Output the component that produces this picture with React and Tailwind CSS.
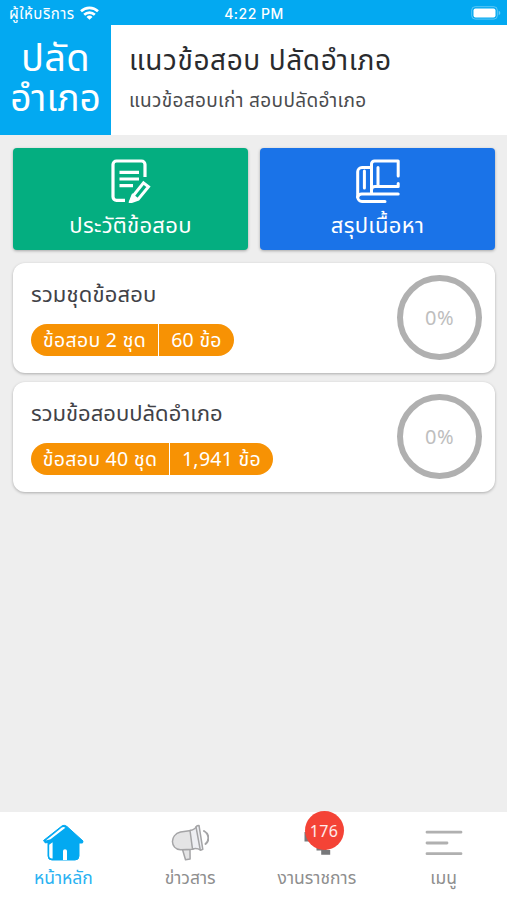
import React from 'react';

const sets = [
  {
    id: 1,
    title: 'รวมชุดข้อสอบ',
    titleClass: 'tracking-[0.15px]',
    sets: 'ข้อสอบ 2 ชุด',
    items: '60 ข้อ',
    setsWidth: 'w-[127px]',
    itemsWidth: 'w-[75px]',
  },
  {
    id: 2,
    title: 'รวมข้อสอบปลัดอำเภอ',
    titleClass: 'tracking-normal',
    sets: 'ข้อสอบ 40 ชุด',
    items: '1,941 ข้อ',
    setsWidth: 'w-[138px]',
    itemsWidth: 'w-[103px]',
  },
];

function WifiIcon() {
  return (
    <svg width="19" height="14" viewBox="0 0 19 14" fill="none" stroke="white" strokeWidth="2.6">
      <path d="M1 5.3a12.2 12.2 0 0 1 17 0" />
      <path d="M4.2 8.8a7.6 7.6 0 0 1 10.6 0" />
      <path d="M9.5 13.8 6.5 10.9a4.3 4.3 0 0 1 6 0z" fill="white" stroke="none" />
    </svg>
  );
}

function BatteryIcon() {
  return (
    <svg width="30" height="14" viewBox="0 0 30 14">
      <rect x="0.7" y="0.7" width="25.6" height="12.4" rx="3.5" fill="none" stroke="white" strokeOpacity="0.35" />
      <rect x="2.5" y="2.4" width="22" height="9" rx="2" fill="white" />
      <path d="M27.7 4.8v4.4c1-.4 1.6-1.2 1.6-2.2s-.6-1.8-1.6-2.2z" fill="white" fillOpacity="0.4" />
    </svg>
  );
}

function StatusBar() {
  return (
    <div className="h-[25px] bg-[#03a9f1] text-white flex items-center justify-between pl-[9px] pr-[6px] shrink-0">
      <div className="flex items-center gap-[5px] w-[110px]">
        <span className="text-[15px] leading-none w-[66px] pt-[3px] tracking-[0.5px] whitespace-nowrap">ผู้ให้บริการ</span>
        <WifiIcon />
      </div>
      <span className="text-[14px] leading-none font-medium tracking-[0.5px] font-['Inter',sans-serif] pt-[3px]">4:22 PM</span>
      <div className="w-[112px] flex justify-end pt-[1px]">
        <BatteryIcon />
      </div>
    </div>
  );
}

function Header() {
  return (
    <header className="flex h-[110px] bg-white shrink-0">
      <div className="w-[111px] bg-[#03a9f1] text-white text-center leading-[39px] pt-[15px] whitespace-nowrap">
        <div className="text-[38px] tracking-[0.3px]">ปลัด</div>
        <div className="text-[37px] leading-[42px]">อำเภอ</div>
      </div>
      <div className="pl-[18px] pt-[17px] whitespace-nowrap">
        <h1 className="text-[28px] leading-[40px] tracking-[0.6px] text-[#2a2b2e]">แนวข้อสอบ ปลัดอำเภอ</h1>
        <p className="text-[19px] leading-[39px] tracking-[0.35px] text-[#4a4b4e]">แนวข้อสอบเก่า สอบปลัดอำเภอ</p>
      </div>
    </header>
  );
}

function HistoryIcon() {
  return (
    <svg width="40" height="44" viewBox="0 0 40 44" fill="none" stroke="white" strokeWidth="3.2">
      <path d="M34 18V5.5a3.5 3.5 0 0 0-3.5-3.5h-25A3.5 3.5 0 0 0 2 5.5v32.3a3.5 3.5 0 0 0 3.5 3.5H14" />
      <path d="M8.5 13.3H28M8.5 20H28M8.5 26.7h13.5" />
      <path d="m32.5 23.8 5 4-10.3 12.4-7.4 2.6 2.6-6.2z" strokeWidth="3" />
      <path d="m17.5 43.6 3.6-9.4 6.8 5.6z" fill="white" stroke="none" />
    </svg>
  );
}

function BooksIcon() {
  return (
    <svg width="44" height="44" viewBox="0 0 44 44" fill="none" stroke="white" strokeWidth="3" strokeLinecap="round" strokeLinejoin="round">
      <path d="M42.2 17V2H18.5a3 3 0 0 0-3 3v29.5M42.2 24.5v3H19a3.5 3.5 0 0 0-3.5 3.5" />
      <path d="M15.5 8.5H6a4.3 4.3 0 0 0-4.3 4.3v25.4A4.3 4.3 0 0 0 6 42.4h23" />
      <path d="M42.2 35H6a4.3 4.3 0 0 0-4.3 3M8.4 12v17M22 8.5v18.5" />
    </svg>
  );
}

function ActionButton({ className, icon, label }) {
  return (
    <button className={`flex-1 h-[102px] rounded-[4px] shadow-[0_1px_3px_rgba(0,0,0,0.3)] flex flex-col items-center pt-[11px] text-white ${className}`}>
      {icon}
      <span className="text-[22px] leading-[47px] tracking-[0.3px] whitespace-nowrap">{label}</span>
    </button>
  );
}

function SetCard({ item }) {
  return (
    <div className="h-[110px] bg-white rounded-[12px] shadow-[0_1px_3px_rgba(0,0,0,0.28)] flex justify-between items-center pl-[18px] pr-[13px] pb-[1px]">
      <div className="self-start pt-[15px] whitespace-nowrap">
        <h2 className={`text-[22px] leading-[36px] text-[#414247] ${item.titleClass}`}>{item.title}</h2>
        <div className="mt-[10px] flex h-[32px] w-max rounded-full overflow-hidden text-white text-[19.5px] leading-[34px] tracking-[0.3px] text-center">
          <span className={`bg-[#f79204] ${item.setsWidth}`}>{item.sets}</span>
          <span className={`bg-[#f79204] ml-px ${item.itemsWidth}`}>{item.items}</span>
        </div>
      </div>
      <div className="w-[85px] h-[85px] rounded-full border-[6px] border-[#b0b0b0] flex items-center justify-center text-[20px] tracking-[0.5px] text-[#bebebe] font-['Noto_Sans',sans-serif]">
        0%
      </div>
    </div>
  );
}

function HomeIcon() {
  return (
    <svg width="42" height="38" viewBox="0 0 42 38">
      <path d="M20.5 1.5 1.5 16.5l1.8 2.4 2.7-.4V32a4 4 0 0 0 4 4h23a4 4 0 0 0 4-4V19h3.5l.5-2L25 2.5q-2.2-1.7-4.5-1z" fill="#03a9f1" stroke="#03a9f1" strokeLinejoin="round" />
      <path d="M3.8 16.6 19.8 3.6q1.6-1.3 3.6.2L8.5 15.2zM7.2 20.7 10.6 18.2v16.2q-3.4.3-3.4-3zM21 36V27q0-1.8 2-1.8t2 1.8v9z" fill="white" />
    </svg>
  );
}

function NewsIcon() {
  return (
    <svg width="38" height="38" viewBox="0 0 38 38" fill="#e4e4e5" stroke="#a4a4a6" strokeWidth="1.5" strokeLinejoin="round" strokeLinecap="round">
      <path d="m11.5 25.5 3 10.3 4.6-.8-.1-9.5z" />
      <path d="M20 6.5 9.5 8C-1.5 11-1 24.5 9.5 25.8l12.5-.6z" />
      <path d="M19 6.5q5.5-1 7-4.7l2-.4 3.8 24-2.3.8q-3.2-2.4-8-1.2z" fill="#eeeff3" />
      <path d="m25 2.8 4.2 22.8" fill="none" />
      <path d="M33 7c5.4 3 5.6 9.8 1.5 13" fill="none" strokeWidth="2" />
    </svg>
  );
}

function WorkIcon() {
  return (
    <svg width="42" height="38" viewBox="0 0 42 38" fill="#77787a">
      <path d="M8.5 8h12v9.5h-12zM20.5 23h10v3.5h-10zM25.2 26h9v4.8h-9z" />
    </svg>
  );
}

function MenuIcon() {
  return (
    <svg width="38" height="38" viewBox="0 0 38 38" stroke="#b0b0b0" strokeWidth="2.8" strokeLinecap="round">
      <path d="M2 8.2h34M2 19h20M2 29.7h34" />
    </svg>
  );
}

function NavItem({ icon, label, active, badge }) {
  return (
    <a className={`relative flex-1 flex flex-col items-center pt-[12px] ${active ? 'text-[#29b2f2]' : 'text-[#8e8e8e]'}`}>
      {icon}
      <span className="text-[17.5px] leading-[34px] whitespace-nowrap">{label}</span>
      {badge && (
        <span className="absolute -top-[1px] left-[51px] w-[39px] h-[39px] rounded-full bg-[#f44336] text-white/90 text-[16px] tracking-[0.4px] leading-[40px] text-center font-['Noto_Sans',sans-serif]">
          {badge}
        </span>
      )}
    </a>
  );
}

export default function App() {
  return (
    <div className="w-full h-screen bg-[#eeeeee] flex flex-col overflow-hidden font-['Noto_Sans_Thai','Noto_Sans',sans-serif]">
      <StatusBar />
      <Header />

      <main className="flex-1 pl-[13px] pr-[12px] pt-[13px]">
        <div className="flex gap-3">
          <ActionButton className="bg-[#04ae80]" icon={<HistoryIcon />} label="ประวัติข้อสอบ" />
          <ActionButton className="bg-[#1a73e8]" icon={<BooksIcon />} label="สรุปเนื้อหา" />
        </div>
        <div className="mt-[13px] flex flex-col gap-[9px]">
          {sets.map((item) => (
            <SetCard key={item.id} item={item} />
          ))}
        </div>
      </main>

      <nav className="h-[88px] bg-white flex shrink-0">
        <NavItem icon={<HomeIcon />} label="หน้าหลัก" active />
        <NavItem icon={<NewsIcon />} label="ข่าวสาร" />
        <NavItem icon={<WorkIcon />} label="งานราชการ" badge="176" />
        <NavItem icon={<MenuIcon />} label="เมนู" />
      </nav>
    </div>
  );
}
